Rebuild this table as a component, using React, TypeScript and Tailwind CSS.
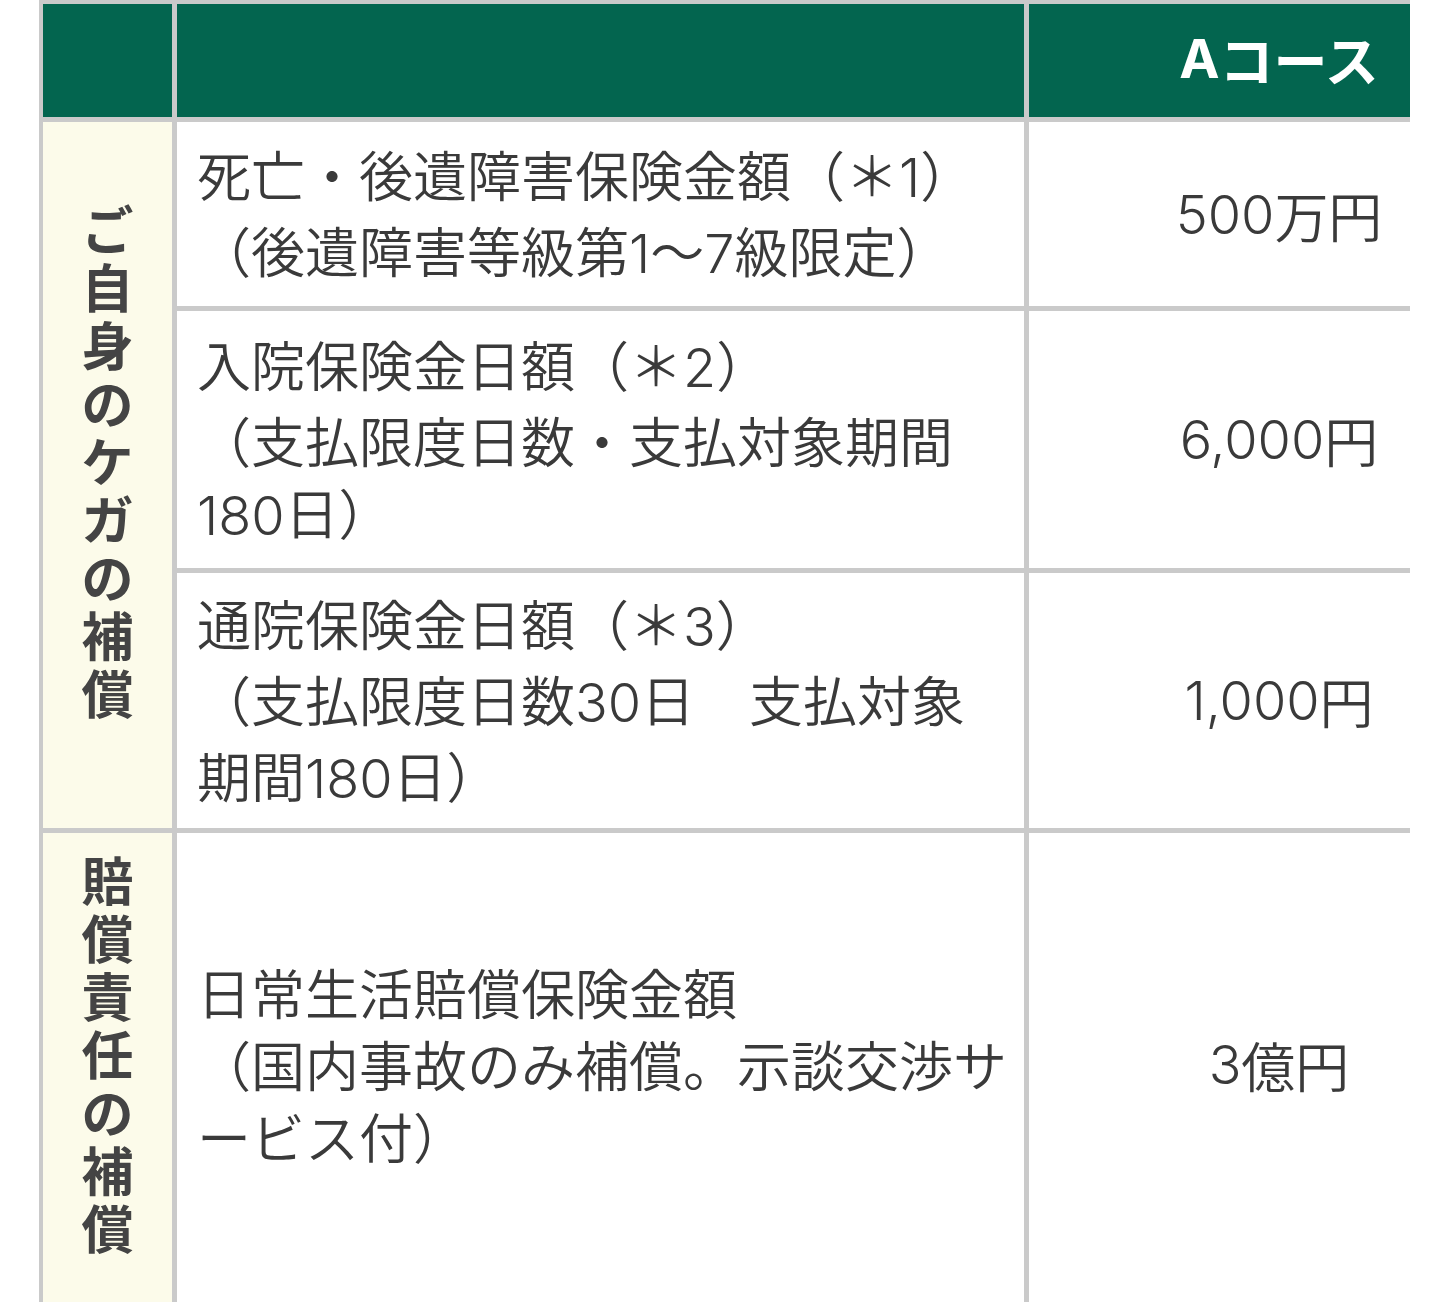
import React from "react";

const font = { fontFamily: '"Noto Sans CJK JP", "Noto Sans", sans-serif' };
const num = { fontFamily: 'Inter, "Noto Sans CJK JP", sans-serif' };

function N({ children }: { children: React.ReactNode }) {
  return <span style={num}>{children}</span>;
}

export default function App() {
  return (
    <div className="w-[1448px] h-[1302px] overflow-hidden bg-white" style={font}>
      <div className="ml-[39px] w-[1371px] overflow-hidden">
        <div className="grid grid-cols-[129px_847px_500px] gap-[5px] bg-[#cacaca] pt-[4px] pl-[4px] w-[1495px] text-[#3a3a3a]">
          {/* header */}
          <div className="h-[113px] bg-[#03654f]" />
          <div className="h-[113px] bg-[#03654f]" />
          <div className="h-[113px] bg-[#03654f] flex items-center justify-center text-white font-bold text-[54px] leading-none pb-[4px]">
            <span style={num}>A</span>コース
          </div>

          {/* group 1 label */}
          <div className="row-span-3 bg-[#fcfbea] flex items-center justify-center pb-[30px]">
            <div className="w-[54px] text-[52px] leading-[58px] font-bold break-all text-center text-[#444]">
              ご自身のケガの補償
            </div>
          </div>

          {/* row 1 */}
          <div className="h-[184px] bg-white flex items-center pl-[20px] text-[54px] font-[350] leading-[72px] whitespace-nowrap">
            <div>
              <div>死亡・後遺障害保険金額（＊<N>1</N>）</div>
              <div>（後遺障害等級第<N>1</N>～<N>7</N>級限定）</div>
            </div>
          </div>
          <div className="h-[184px] bg-white flex items-center justify-center text-[54px] font-[350]">
            <N>500</N>万円
          </div>

          {/* row 2 */}
          <div className="h-[257px] bg-white flex items-center pl-[20px] text-[54px] font-[350] leading-[72px] whitespace-nowrap">
            <div>
              <div>入院保険金日額（＊<N>2</N>）</div>
              <div>（支払限度日数・支払対象期間</div>
              <div><N>180</N>日）</div>
            </div>
          </div>
          <div className="h-[257px] bg-white flex items-center justify-center text-[54px] font-[350]">
            <N>6,000</N>円
          </div>

          {/* row 3 */}
          <div className="h-[255px] bg-white flex items-center pl-[20px] text-[54px] font-[350] leading-[72px] whitespace-nowrap">
            <div>
              <div>通院保険金日額（＊<N>3</N>）</div>
              <div>（支払限度日数<N>30</N>日　支払対象</div>
              <div>期間<N>180</N>日）</div>
            </div>
          </div>
          <div className="h-[255px] bg-white flex items-center justify-center text-[54px] font-[350]">
            <N>1,000</N>円
          </div>

          {/* row 4 */}
          <div className="h-[480px] bg-[#fcfbea] flex items-center justify-center pb-[40px]">
            <div className="w-[54px] text-[52px] leading-[58px] font-bold break-all text-center text-[#444]">
              賠償責任の補償
            </div>
          </div>
          <div className="h-[480px] bg-white flex items-center pl-[20px] pb-[18px] text-[54px] font-[350] leading-[72px] whitespace-nowrap">
            <div>
              <div>日常生活賠償保険金額</div>
              <div>（国内事故のみ補償。示談交渉サ</div>
              <div>ービス付）</div>
            </div>
          </div>
          <div className="h-[480px] bg-white flex items-center justify-center pb-[18px] text-[54px] font-[350]">
            <N>3</N>億円
          </div>
        </div>
      </div>
    </div>
  );
}
